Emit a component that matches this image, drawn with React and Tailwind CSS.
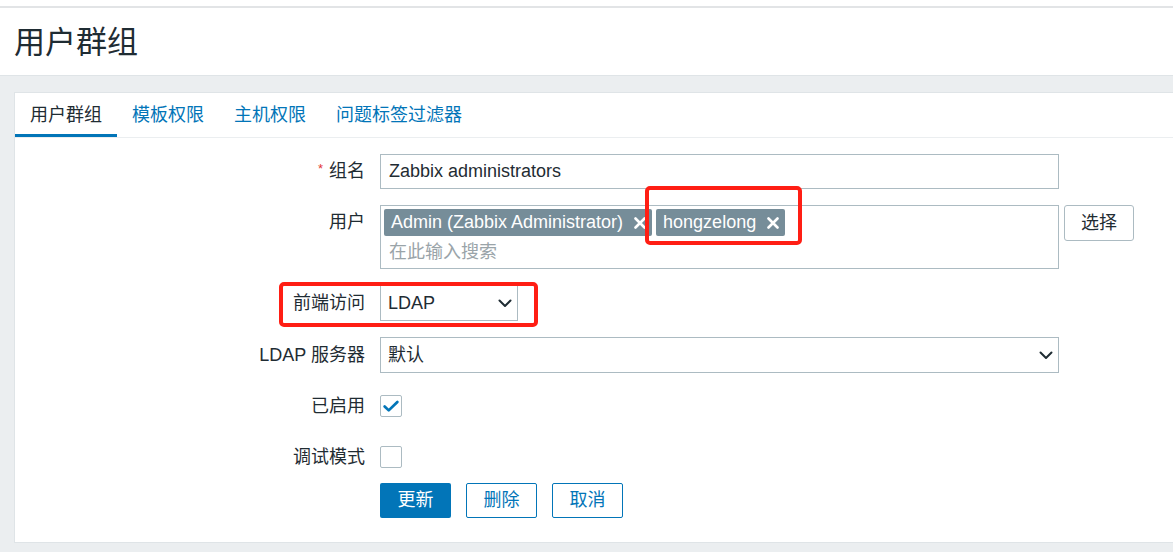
import React from "react";

const font = "font-['Liberation_Sans','Noto_Sans_CJK_SC',sans-serif]";

function Chevron() {
  return (
    <svg width="14" height="9" viewBox="0 0 14 9" fill="none">
      <path d="M1.5 1.5l5.5 5.5 5.5-5.5" stroke="#1f2c33" strokeWidth="2" strokeLinecap="round" strokeLinejoin="round" />
    </svg>
  );
}

function Cross() {
  return (
    <svg width="12" height="12" viewBox="0 0 12 12" fill="none">
      <path d="M1.5 1.5l9 9M10.5 1.5l-9 9" stroke="#ffffff" strokeWidth="2.6" strokeLinecap="round" />
    </svg>
  );
}

function Tag({ children }) {
  return (
    <span className="flex items-center h-[27px] pl-[7px] pr-[6px] rounded-[2px] bg-[#768d99] text-white text-[18px]">
      <span>{children}</span>
      <span className="ml-[11px] flex items-center">
        <Cross />
      </span>
    </span>
  );
}

function Label({ children, required }) {
  return (
    <div className="w-[350px] shrink-0 flex items-center justify-end text-[18px] text-[#1f2c33]">
      {required && <span className="text-[#e33734] text-[13px] mr-[6px] -mt-[6px]">*</span>}
      {children}
    </div>
  );
}

function Checkbox({ checked }) {
  return (
    <span className="w-[22px] h-[22px] border border-[#acbbc2] rounded-[2px] bg-white flex items-center justify-center">
      {checked && (
        <svg width="22" height="22" viewBox="0 0 22 22" fill="none">
          <path d="M4 11.5l4.5 4.3L18 6.5" stroke="#0275b8" strokeWidth="3" strokeLinecap="round" strokeLinejoin="round" />
        </svg>
      )}
    </span>
  );
}

export default function App() {
  const tabs = ["用户群组", "模板权限", "主机权限", "问题标签过滤器"];

  return (
    <div className={`relative w-full h-[552px] overflow-hidden bg-[#ebeef0] ${font}`}>
      <div className="h-[6px] bg-white" />
      <div className="h-[2px] bg-[#e2e4e6]" />
      <div className="h-[68px] bg-white flex items-center pl-[14px] border-b border-[#dfe4e7]">
        <h1 className="text-[31px] text-[#1f2c33] leading-none pt-[2px]">用户群组</h1>
      </div>

      <div className="ml-[14px] mt-[16px] h-[451px] bg-white border border-r-0 border-[#dfe4e7]">
        <div className="flex h-[45px] border-b border-[#ebeef0]">
          {tabs.map((t, i) => (
            <div
              key={t}
              className={
                i === 0
                  ? "px-[15px] flex items-center border-b-[3px] border-[#0275b8] text-[18px] text-[#1f2c33] pt-[3px]"
                  : "px-[15px] flex items-center text-[18px] text-[#0275b8]"
              }
            >
              {t}
            </div>
          ))}
        </div>

        <div className="pt-[16px]">
          <div className="flex h-[35px]">
            <Label required>组名</Label>
            <div className="ml-[15px] w-[679px] border border-[#acbbc2] flex items-center pl-[8px] text-[18px] text-[#1f2c33]">
              Zabbix administrators
            </div>
          </div>

          <div className="flex mt-[16px]">
            <div className="w-[350px] shrink-0 h-[34px] flex items-center justify-end text-[18px] text-[#1f2c33]">
              用户
            </div>
            <div className="ml-[15px] w-[679px] h-[64px] border border-[#acbbc2] p-[3px]">
              <div className="flex gap-[4px]">
                <Tag>Admin (Zabbix Administrator)</Tag>
                <Tag>hongzelong</Tag>
              </div>
              <div className="h-[32px] flex items-center pl-[5px] text-[18px] text-[#9aa4a9]">在此输入搜索</div>
            </div>
            <button className="ml-[5px] w-[70px] h-[36px] border border-[#acbbc2] rounded-[3px] bg-white text-[18px] text-[#1f2c33]">
              选择
            </button>
          </div>

          <div className="flex h-[36px] mt-[16px]">
            <Label>前端访问</Label>
            <div className="ml-[15px] w-[138px] border border-[#acbbc2] flex items-center justify-between pl-[7px] pr-[5px] text-[18px] text-[#1f2c33]">
              <span>LDAP</span>
              <Chevron />
            </div>
          </div>

          <div className="flex h-[36px] mt-[16px]">
            <Label>LDAP 服务器</Label>
            <div className="ml-[15px] w-[679px] border border-[#acbbc2] flex items-center justify-between pl-[7px] pr-[5px] text-[18px] text-[#1f2c33]">
              <span>默认</span>
              <Chevron />
            </div>
          </div>

          <div className="flex h-[36px] mt-[15px]">
            <Label>已启用</Label>
            <div className="ml-[15px] flex items-center">
              <Checkbox checked />
            </div>
          </div>

          <div className="flex h-[36px] mt-[15px]">
            <Label>调试模式</Label>
            <div className="ml-[15px] flex items-center">
              <Checkbox />
            </div>
          </div>

          <div className="flex mt-[8px] pl-[365px] gap-[15px]">
            <button className="w-[71px] h-[35px] rounded-[2px] bg-[#0275b8] text-white text-[18px]">更新</button>
            <button className="w-[71px] h-[35px] rounded-[2px] border border-[#0275b8] bg-white text-[#0275b8] text-[18px]">删除</button>
            <button className="w-[71px] h-[35px] rounded-[2px] border border-[#0275b8] bg-white text-[#0275b8] text-[18px]">取消</button>
          </div>
        </div>
      </div>

      <div className="absolute left-[645px] top-[186px] w-[157px] h-[59px] border-4 border-[#ff1e14] rounded-[5px]" />
      <div className="absolute left-[279px] top-[282px] w-[259px] h-[45px] border-4 border-[#ff1e14] rounded-[5px]" />
    </div>
  );
}
